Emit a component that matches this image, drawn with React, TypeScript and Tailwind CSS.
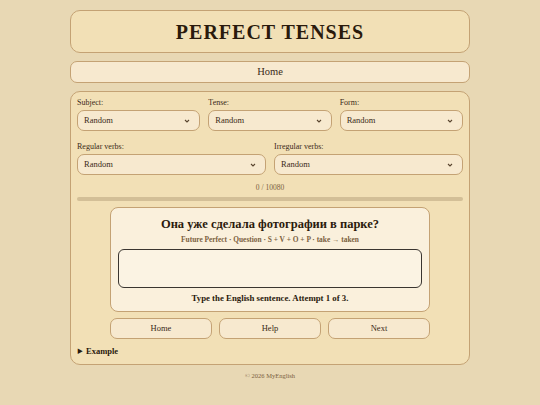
import React from "react";

const Chevron = () => (
  <svg width="6" height="4" viewBox="0 0 6 4" className="shrink-0">
    <path d="M1 1l2 2 2-2" fill="none" stroke="#5a4630" strokeWidth="1.1" />
  </svg>
);

const Select = ({ className = "" }: { className?: string }) => (
  <div className={`flex h-[21px] items-center justify-between rounded-[7px] border border-[#c4a274] bg-[#f7e9cf] pl-[6px] pr-[9px] text-[8.5px] text-[#3b2a18] ${className}`}>
    <span>Random</span>
    <Chevron />
  </div>
);

const Field = ({ label }: { label: string }) => (
  <div className="flex flex-col gap-[2px]">
    <div className="text-[8px] leading-[10px] text-[#3b2a18]">{label}</div>
    <Select />
  </div>
);

export default function App() {
  return (
    <div
      className="min-h-[405px] w-full bg-[#e8d8b4] pt-[10px] text-[#2a1d10]"
      style={{ fontFamily: '"Liberation Serif", "Noto Sans CJK SC", serif' }}
    >
      <div className="mx-auto flex w-[400px] flex-col">
        <div className="flex h-[43px] items-center justify-center rounded-[10px] border border-[#c4a274] bg-[#f2e0b6]">
          <h1 className="text-[20px] font-bold tracking-[1px] text-[#2a1a0c]">PERFECT TENSES</h1>
        </div>
        <div className="mt-[8px] flex h-[22px] items-center justify-center rounded-[7px] border border-[#c4a274] bg-[#f7e9cf] text-[10.5px] text-[#3b2a18]">
          Home
        </div>
        <div className="mt-[8px] flex flex-col rounded-[10px] border border-[#c4a274] bg-[#f2e0b6] px-[6px] pb-[8px] pt-[6px]">
          <div className="grid grid-cols-3 gap-x-[8px]">
            <Field label="Subject:" />
            <Field label="Tense:" />
            <Field label="Form:" />
          </div>
          <div className="mt-[11px] grid grid-cols-2 gap-x-[8px]">
            <Field label="Regular verbs:" />
            <Field label="Irregular verbs:" />
          </div>
          <div className="mt-[8px] text-center text-[7.5px] leading-[9px] text-[#7a6040]">0 / 10080</div>
          <div className="mt-[5px] h-[4px] rounded-full bg-[#d3bf97]" />
          <div className="mx-auto mt-[6px] flex w-[320px] flex-col items-center rounded-[8px] border border-[#c4a274] bg-[#faf0dc] px-[7px] pb-[7px] pt-[8px]">
            <div className="text-[12.5px] font-bold leading-[16px] text-[#2a1a0c]">Она уже сделала фотографии в парке?</div>
            <div className="mt-[3px] text-[7.4px] font-bold leading-[9px] text-[#7a6040]">
              Future Perfect · Question · S + V + O + P · take → taken
            </div>
            <div className="mt-[5px] h-[39px] w-full rounded-[6px] border border-[#3a3530] bg-[#fbf3e3]" />
            <div className="mt-[5px] text-[8.8px] font-bold leading-[11px] text-[#2a1a0c]">
              Type the English sentence. Attempt 1 of 3.
            </div>
          </div>
          <div className="mx-auto mt-[6px] grid w-[320px] grid-cols-3 gap-x-[7px]">
            {["Home", "Help", "Next"].map((t) => (
              <div
                key={t}
                className="flex h-[21px] items-center justify-center rounded-[7px] border border-[#c4a274] bg-[#f7e9cf] text-[8.5px] text-[#3b2a18]"
              >
                {t}
              </div>
            ))}
          </div>
          <div className="mt-[7px] flex items-center gap-[3px] text-[8.5px] font-bold leading-[10px] text-[#2a1a0c]">
            <span className="text-[6px]">▶</span>
            <span>Example</span>
          </div>
        </div>
        <div className="mt-[6px] text-center text-[6.5px] text-[#7a6040]">© 2026 MyEnglish</div>
      </div>
    </div>
  );
}
